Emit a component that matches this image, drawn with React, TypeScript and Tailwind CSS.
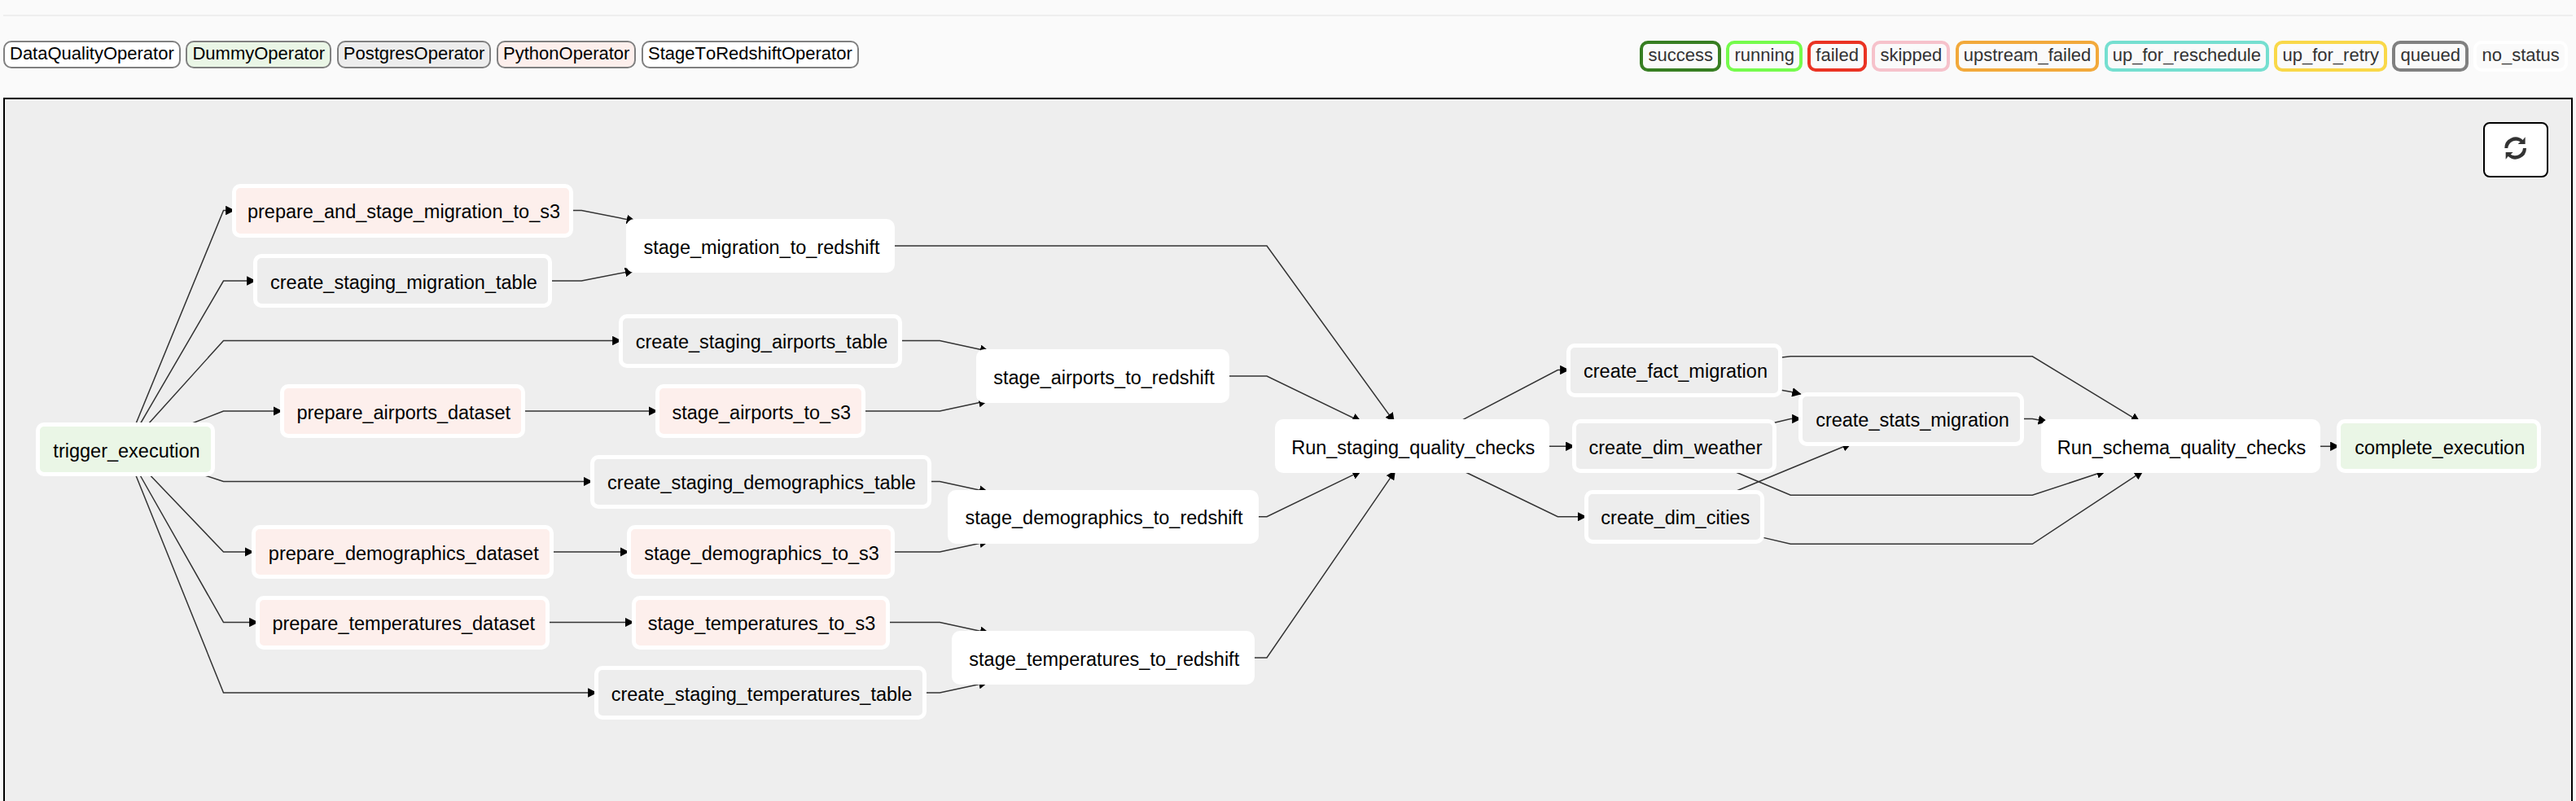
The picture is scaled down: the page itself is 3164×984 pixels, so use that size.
type Kind = 'dummy' | 'python' | 'postgres' | 'plain';
type Point = [number, number];

interface TaskNode {
  id: string;
  left: number;
  right: number;
  cy: number;
  kind: Kind;
}

interface Edge {
  from: string;
  to: string;
  bends: Point[];
}

const fills: Record<Kind, string> = {
  dummy: 'bg-[#eaf6e6]',
  python: 'bg-[#fdefec]',
  postgres: 'bg-[#ededed]',
  plain: 'bg-white',
};

const operators: { name: string; kind: Kind }[] = [
  { name: 'DataQualityOperator', kind: 'plain' },
  { name: 'DummyOperator', kind: 'dummy' },
  { name: 'PostgresOperator', kind: 'postgres' },
  { name: 'PythonOperator', kind: 'python' },
  { name: 'StageToRedshiftOperator', kind: 'plain' },
];

const statuses = [
  { name: 'success', border: 'border-[#377e22]' },
  { name: 'running', border: 'border-[#75fb4c]' },
  { name: 'failed', border: 'border-[#ea3323]' },
  { name: 'skipped', border: 'border-[#f6c2cb]' },
  { name: 'upstream_failed', border: 'border-[#f2a93b]' },
  { name: 'up_for_reschedule', border: 'border-[#75dfd0]' },
  { name: 'up_for_retry', border: 'border-[#f9d849]' },
  { name: 'queued', border: 'border-[#808080]' },
  { name: 'no_status', border: 'border-white' },
];

// Page position of the canvas content box; graph coordinates are page based.
const ORIGIN_X = 6;
const ORIGIN_Y = 122;
const NODE_HEIGHT = 66;
const BORDER = 5;

const nodes: TaskNode[] = [
  { id: 'trigger_execution', left: 44, right: 264, cy: 552, kind: 'dummy' },
  { id: 'prepare_and_stage_migration_to_s3', left: 285, right: 704, cy: 258.5, kind: 'python' },
  { id: 'create_staging_migration_table', left: 311, right: 678, cy: 345, kind: 'postgres' },
  { id: 'prepare_airports_dataset', left: 343.5, right: 645, cy: 505, kind: 'python' },
  { id: 'prepare_demographics_dataset', left: 308.5, right: 680, cy: 678, kind: 'python' },
  { id: 'prepare_temperatures_dataset', left: 314, right: 674.5, cy: 764.5, kind: 'python' },
  { id: 'stage_migration_to_redshift', left: 769, right: 1099, cy: 302, kind: 'plain' },
  { id: 'create_staging_airports_table', left: 760, right: 1108, cy: 418.5, kind: 'postgres' },
  { id: 'stage_airports_to_s3', left: 804.5, right: 1063, cy: 505, kind: 'python' },
  { id: 'create_staging_demographics_table', left: 724.5, right: 1143.5, cy: 591.5, kind: 'postgres' },
  { id: 'stage_demographics_to_s3', left: 769.5, right: 1098.5, cy: 678, kind: 'python' },
  { id: 'stage_temperatures_to_s3', left: 775.5, right: 1092.5, cy: 764.5, kind: 'python' },
  { id: 'create_staging_temperatures_table', left: 730, right: 1138, cy: 851, kind: 'postgres' },
  { id: 'stage_airports_to_redshift', left: 1199, right: 1510, cy: 462, kind: 'plain' },
  { id: 'stage_demographics_to_redshift', left: 1163.5, right: 1545.5, cy: 634.7, kind: 'plain' },
  { id: 'stage_temperatures_to_redshift', left: 1169, right: 1540.5, cy: 808, kind: 'plain' },
  { id: 'Run_staging_quality_checks', left: 1565.5, right: 1903, cy: 548.3, kind: 'plain' },
  { id: 'create_fact_migration', left: 1924, right: 2189, cy: 454.5, kind: 'postgres' },
  { id: 'create_dim_weather', left: 1931, right: 2182, cy: 548.3, kind: 'postgres' },
  { id: 'create_dim_cities', left: 1945.5, right: 2167, cy: 634.7, kind: 'postgres' },
  { id: 'create_stats_migration', left: 2209, right: 2486, cy: 514.5, kind: 'postgres' },
  { id: 'Run_schema_quality_checks', left: 2506.5, right: 2849.5, cy: 548.3, kind: 'plain' },
  { id: 'complete_execution', left: 2870, right: 3120.5, cy: 548.3, kind: 'dummy' },
];

const edges: Edge[] = [
  { from: 'trigger_execution', to: 'prepare_and_stage_migration_to_s3', bends: [[274.5, 258.5]] },
  { from: 'trigger_execution', to: 'create_staging_migration_table', bends: [[274.5, 345]] },
  { from: 'trigger_execution', to: 'create_staging_airports_table', bends: [[274.5, 418.5]] },
  { from: 'trigger_execution', to: 'prepare_airports_dataset', bends: [[274.5, 505]] },
  { from: 'trigger_execution', to: 'create_staging_demographics_table', bends: [[274.5, 591.5]] },
  { from: 'trigger_execution', to: 'prepare_demographics_dataset', bends: [[274.5, 678]] },
  { from: 'trigger_execution', to: 'prepare_temperatures_dataset', bends: [[274.5, 764.5]] },
  { from: 'trigger_execution', to: 'create_staging_temperatures_table', bends: [[274.5, 851]] },
  { from: 'prepare_and_stage_migration_to_s3', to: 'stage_migration_to_redshift', bends: [[714.3, 258.5]] },
  { from: 'create_staging_migration_table', to: 'stage_migration_to_redshift', bends: [[714.3, 345]] },
  { from: 'prepare_airports_dataset', to: 'stage_airports_to_s3', bends: [[714.3, 505]] },
  { from: 'prepare_demographics_dataset', to: 'stage_demographics_to_s3', bends: [[714.3, 678]] },
  { from: 'prepare_temperatures_dataset', to: 'stage_temperatures_to_s3', bends: [[714.3, 764.5]] },
  { from: 'create_staging_airports_table', to: 'stage_airports_to_redshift', bends: [[1154.3, 418.5]] },
  { from: 'stage_airports_to_s3', to: 'stage_airports_to_redshift', bends: [[1154.3, 505]] },
  { from: 'create_staging_demographics_table', to: 'stage_demographics_to_redshift', bends: [[1154.3, 591.5]] },
  { from: 'stage_demographics_to_s3', to: 'stage_demographics_to_redshift', bends: [[1154.3, 678]] },
  { from: 'stage_temperatures_to_s3', to: 'stage_temperatures_to_redshift', bends: [[1154.3, 764.5]] },
  { from: 'create_staging_temperatures_table', to: 'stage_temperatures_to_redshift', bends: [[1154.3, 851]] },
  { from: 'stage_migration_to_redshift', to: 'Run_staging_quality_checks', bends: [[1556, 302]] },
  { from: 'stage_airports_to_redshift', to: 'Run_staging_quality_checks', bends: [[1556, 462]] },
  { from: 'stage_demographics_to_redshift', to: 'Run_staging_quality_checks', bends: [[1556, 634.7]] },
  { from: 'stage_temperatures_to_redshift', to: 'Run_staging_quality_checks', bends: [[1556, 808]] },
  { from: 'Run_staging_quality_checks', to: 'create_fact_migration', bends: [[1913.3, 454.5]] },
  { from: 'Run_staging_quality_checks', to: 'create_dim_weather', bends: [[1913.3, 548.3]] },
  { from: 'Run_staging_quality_checks', to: 'create_dim_cities', bends: [[1913.3, 634.7]] },
  { from: 'create_fact_migration', to: 'create_stats_migration', bends: [[2199.3, 481.3]] },
  { from: 'create_dim_weather', to: 'create_stats_migration', bends: [[2199.3, 514.5]] },
  { from: 'create_dim_cities', to: 'create_stats_migration', bends: [[2199.3, 575.5]] },
  { from: 'create_fact_migration', to: 'Run_schema_quality_checks', bends: [[2199.3, 437.8], [2496.3, 437.8]] },
  { from: 'create_dim_weather', to: 'Run_schema_quality_checks', bends: [[2199.3, 608.3], [2496.3, 608.3]] },
  { from: 'create_dim_cities', to: 'Run_schema_quality_checks', bends: [[2199.3, 668.3], [2496.3, 668.3]] },
  { from: 'create_stats_migration', to: 'Run_schema_quality_checks', bends: [[2496.3, 514.5]] },
  { from: 'Run_schema_quality_checks', to: 'complete_execution', bends: [[2859.8, 548.3]] },
];

const byId = new Map(nodes.map((n) => [n.id, n]));

// Point where the ray from the node centre towards p leaves the node rectangle.
function intersect(node: TaskNode, p: Point): Point {
  const cx = (node.left + node.right) / 2;
  const dx = p[0] - cx;
  const dy = p[1] - node.cy;
  const hw = (node.right - node.left - BORDER) / 2;
  const hh = (NODE_HEIGHT - BORDER) / 2;
  const t = Math.min(dx ? hw / Math.abs(dx) : Infinity, dy ? hh / Math.abs(dy) : Infinity);
  return [cx + dx * t, node.cy + dy * t];
}

function edgePath({ from, to, bends }: Edge): string {
  const start = intersect(byId.get(from)!, bends[0]);
  const end = intersect(byId.get(to)!, bends[bends.length - 1]);
  return 'M' + [start, ...bends, end].map((p) => p.join(',')).join('L');
}

function Legend() {
  return (
    <div className="mt-[30px] flex h-[68px] items-start justify-between pr-[6px] text-[22px] leading-[28px] [font-kerning:none]">
      <div className="flex gap-[6.7px] text-black">
        {operators.map((o) => (
          <span key={o.name} className={`h-[34px] rounded-[10px] border-2 border-[#808080] px-[6px] ${fills[o.kind]}`}>
            {o.name}
          </span>
        ))}
      </div>
      <div className="flex gap-[6.2px] text-[#333]">
        {statuses.map((s) => (
          <span key={s.name} className={`h-[38px] rounded-[10px] border-4 px-[6.15px] ${s.border}`}>
            {s.name}
          </span>
        ))}
      </div>
    </div>
  );
}

function RefreshIcon() {
  return (
    <svg viewBox="246 474 82 84" className="h-[28px] w-[27.3px] fill-[#333]">
      <path d="M247 516A40 40 0 0 1 314 486L323 475V501H296L305 492.500A30 30 0 0 0 259 516Z" />
      <path
        transform="rotate(180 287 516)"
        d="M247 516A40 40 0 0 1 314 486L323 475V501H296L305 492.500A30 30 0 0 0 259 516Z"
      />
    </svg>
  );
}

function Graph() {
  return (
    <div className="absolute inset-0">
      <svg className="absolute inset-0" width="3152" height="862" viewBox={`${ORIGIN_X} ${ORIGIN_Y} 3152 862`}>
        <defs>
          <marker
            id="arrow"
            viewBox="0 0 10 10"
            refX="9"
            refY="5"
            markerWidth="11.5"
            markerHeight="11.5"
            markerUnits="userSpaceOnUse"
            orient="auto"
          >
            <path d="M0 0L10 5L0 10Z" />
          </marker>
        </defs>
        {edges.map((e) => (
          <path
            key={`${e.from}-${e.to}`}
            d={edgePath(e)}
            fill="none"
            stroke="#333"
            strokeWidth="1.5"
            markerEnd="url(#arrow)"
          />
        ))}
      </svg>
      {nodes.map((n) => (
        <div
          key={n.id}
          className={`absolute flex h-[66px] items-center justify-center rounded-[10px] border-5 border-white pt-[5px] pl-[3px] text-[23.5px] leading-none whitespace-nowrap text-black ${fills[n.kind]}`}
          style={{
            left: n.left - ORIGIN_X,
            top: n.cy - NODE_HEIGHT / 2 - ORIGIN_Y,
            width: n.right - n.left,
          }}
        >
          {n.id}
        </div>
      ))}
    </div>
  );
}

export default function App() {
  return (
    <div className="flex h-[984px] w-full flex-col overflow-hidden bg-[#fafafa] pr-[4px] pl-[4px] font-['Liberation_Sans',Arial,sans-serif]">
      <div className="mt-[18px] h-[2px] shrink-0 bg-[#eee]" />
      <Legend />
      <div className="h-[2px] shrink-0 bg-[#eee]" />
      <main className="relative flex flex-1 items-start justify-end border-2 border-b-0 border-black bg-[#eee] pt-[28px] pr-[28px]">
        <Graph />
        <button className="relative flex h-[68px] w-[80px] items-center justify-center rounded-[8px] border-2 border-black bg-white pb-[4px]">
          <RefreshIcon />
        </button>
      </main>
    </div>
  );
}
